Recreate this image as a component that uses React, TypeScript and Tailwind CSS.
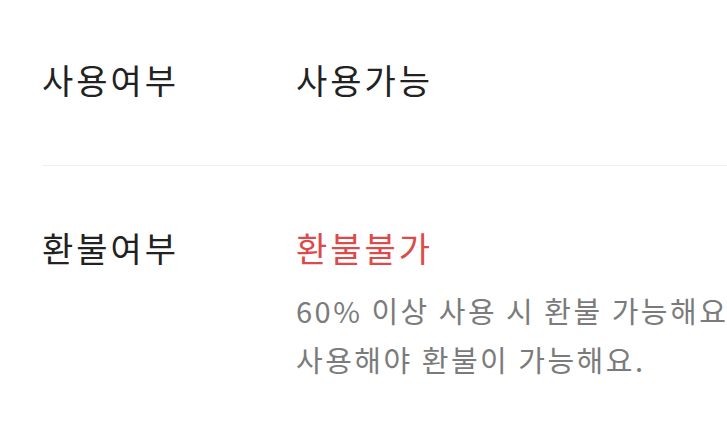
export default function App() {
  const font = { fontFamily: '"Noto Sans CJK KR", "Noto Sans", sans-serif' };
  return (
    <div className="w-[727px] h-[429px] overflow-hidden bg-white" style={font}>
      <div className="pl-[42px]">
        <div className="flex pt-[55px] pb-[60px]">
          <div className="w-[254px] shrink-0 text-[34px] leading-[50px] tracking-[3px] text-[#222222]">사용여부</div>
          <div className="text-[34px] leading-[50px] tracking-[3px] text-[#222222]">사용가능</div>
        </div>
        <div className="h-px w-[1000px] bg-[#f0f0f0]" />
        <div className="flex pt-[57px]">
          <div className="w-[254px] shrink-0 text-[34px] leading-[50px] tracking-[3px] text-[#222222]">환불여부</div>
          <div className="flex flex-col">
            <div className="text-[34px] leading-[50px] tracking-[3px] text-[#dc4a4a]">환불불가</div>
            <div className="mt-[13px] text-[29px] leading-[49px] tracking-[2.5px] text-[#7b7b7b] whitespace-nowrap">
              <div>60% 이상 사용 시 환불 가능해요</div>
              <div>사용해야 환불이 가능해요.</div>
            </div>
          </div>
        </div>
      </div>
    </div>
  );
}
